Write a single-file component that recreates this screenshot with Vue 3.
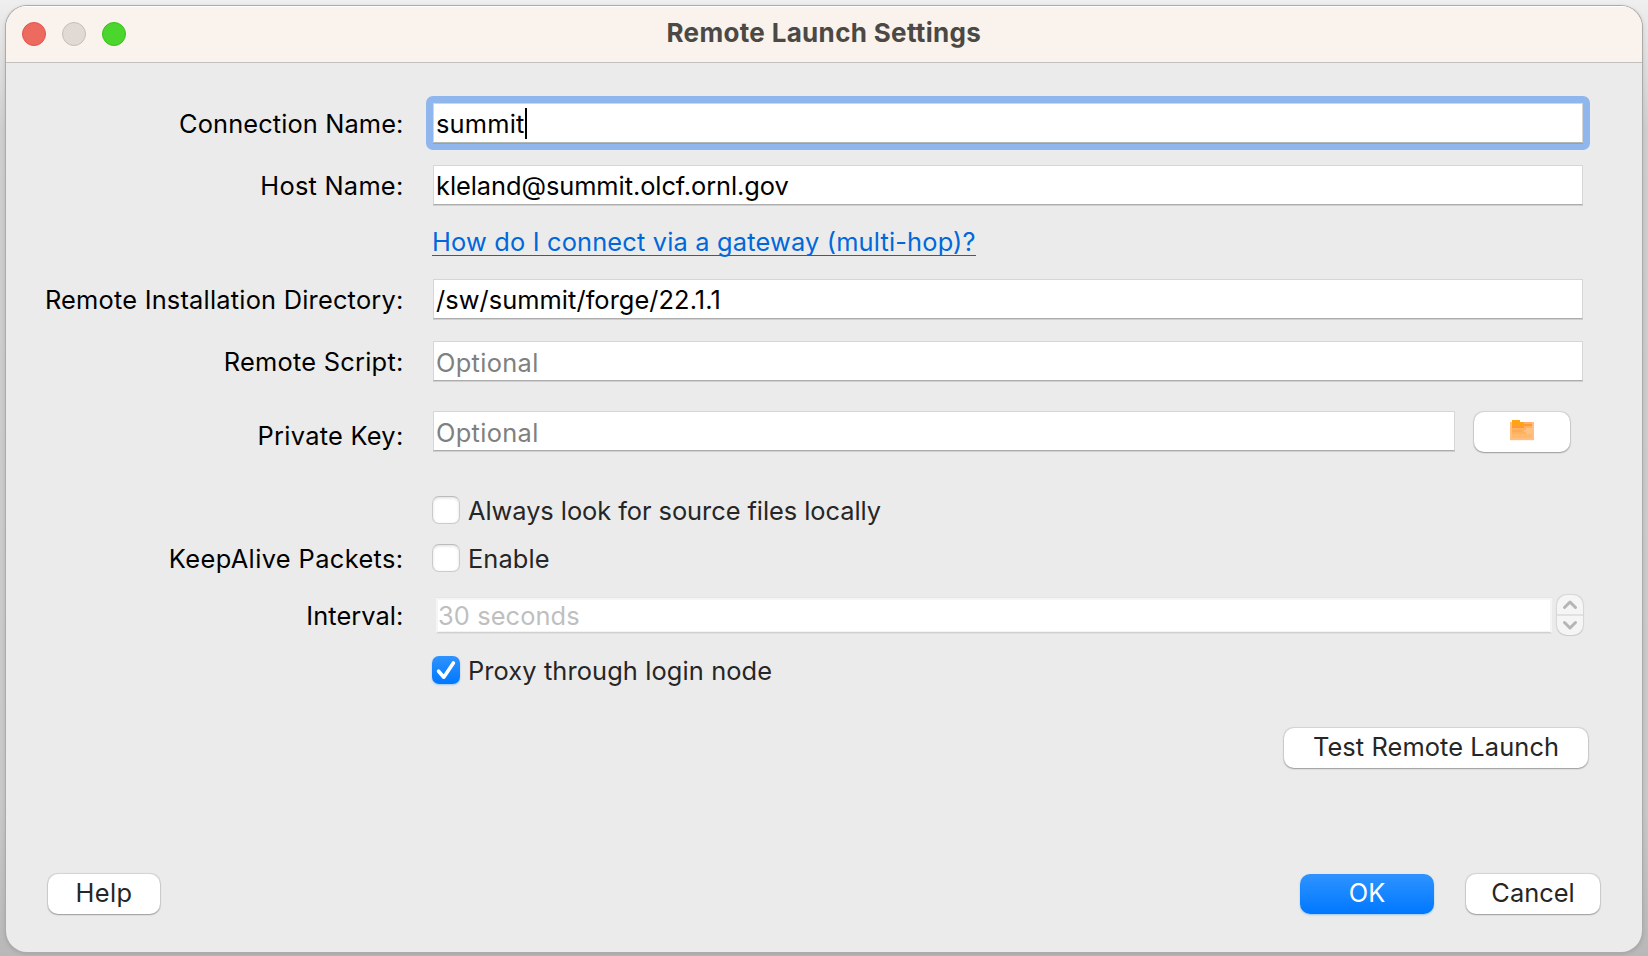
<script setup>
const ls = (v) => ({ letterSpacing: v + 'px' })

const fields = {
  name: { label: 'Connection Name:', ls: 0.11, value: 'summit', vs: 0.2 },
  host: { label: 'Host Name:', ls: 0.25, value: 'kleland@summit.olcf.ornl.gov', vs: -0.06 },
  dir: { label: 'Remote Installation Directory:', ls: 0.21, value: '/sw/summit/forge/22.1.1', vs: 0.06 },
  script: { label: 'Remote Script:', ls: 0.24, hint: 'Optional', vs: 0.33 },
  key: { label: 'Private Key:', ls: 0.27, hint: 'Optional', vs: 0.33 }
}
</script>

<template>
  <div class="desktop">
    <main class="window">
      <header class="titlebar">
        <div class="lights">
          <span class="light close"></span>
          <span class="light minimise"></span>
          <span class="light zoom"></span>
        </div>
        <h1 class="title">Remote Launch Settings</h1>
      </header>

      <form class="form" @submit.prevent>
        <div class="row row-name">
          <label class="label" :style="ls(fields.name.ls)">{{ fields.name.label }}</label>
          <div class="field focused"><span :style="ls(fields.name.vs)">{{ fields.name.value }}</span><i class="caret"></i></div>
        </div>

        <div class="row row-host">
          <label class="label" :style="ls(fields.host.ls)">{{ fields.host.label }}</label>
          <div class="field"><span :style="ls(fields.host.vs)">{{ fields.host.value }}</span></div>
        </div>

        <div class="row row-link">
          <span class="label"></span>
          <a class="link">How do I connect via a gateway (multi-hop)?</a>
        </div>

        <div class="row row-dir">
          <label class="label" :style="ls(fields.dir.ls)">{{ fields.dir.label }}</label>
          <div class="field"><span :style="ls(fields.dir.vs)">{{ fields.dir.value }}</span></div>
        </div>

        <div class="row row-script">
          <label class="label" :style="ls(fields.script.ls)">{{ fields.script.label }}</label>
          <div class="field hint low"><span :style="ls(fields.script.vs)">{{ fields.script.hint }}</span></div>
        </div>

        <div class="row row-key">
          <label class="label" :style="ls(fields.key.ls)">{{ fields.key.label }}</label>
          <div class="field hint low"><span :style="ls(fields.key.vs)">{{ fields.key.hint }}</span></div>
          <button class="btn browse" type="button" aria-label="Browse">
            <svg width="24" height="22" viewBox="0 0 24 22" shape-rendering="crispEdges">
              <path d="M0 2h24v18H0z" fill="#ffbf80" />
              <path d="M10 0h14v2H10zM0 0h2v2H0z" fill="#fff" />
              <path d="M2 0h8v2h4v4H2z" fill="#ffa414" />
              <path d="M10 0h4v2h-4z" fill="#fff" />
              <path d="M14 2h8v2h-8z" fill="#ffb06a" />
              <path d="M2 6h12v2H2zM14 4h8v2h-8z" fill="#ff9838" />
              <path d="M2 8h20v10H2zM14 6h8v2h-8z" fill="#ffb160" />
              <path d="M2 10h10v2H2z" fill="#ffa954" />
              <path d="M16 8h6v6h-6v-2h-2v-2h2z" fill="#ffc084" />
              <path d="M2 14h20v4H2z" fill="#ffb96c" />
              <path d="M0 20h24v1H0z" fill="#fff4e9" />
            </svg>
          </button>
        </div>

        <div class="row row-source">
          <span class="label"></span>
          <span class="box"></span>
          <span class="option" :style="ls(-0.05)">Always look for source files locally</span>
        </div>

        <div class="row row-keep">
          <label class="label" :style="ls(0.38)">KeepAlive Packets:</label>
          <span class="box"></span>
          <span class="option" :style="ls(0.1)">Enable</span>
        </div>

        <div class="row row-interval">
          <label class="label" :style="ls(0.08)">Interval:</label>
          <div class="spin"><span :style="ls(0.1)">30 seconds</span></div>
          <div class="stepper">
            <svg width="26" height="40" viewBox="0 0 26 40" fill="none" stroke="#b5b5b5" stroke-width="3" stroke-linecap="round" stroke-linejoin="round">
              <path d="M7.5 12.5l5.5-5.5 5.5 5.5" />
              <path d="M7.5 27.5l5.5 5.5 5.5-5.5" />
              <path d="M0 20h26" stroke="#e1e1e1" stroke-width="2" stroke-linecap="butt" />
            </svg>
          </div>
        </div>

        <div class="row row-proxy">
          <span class="label"></span>
          <span class="box checked">
            <svg width="28" height="28" viewBox="0 0 28 28" fill="none" stroke="#fff" stroke-width="3.6" stroke-linecap="round" stroke-linejoin="round">
              <path d="M6.6 15.2l5.2 6L21.4 7" />
            </svg>
          </span>
          <span class="option" :style="ls(0.11)">Proxy through login node</span>
        </div>

        <div class="test-bar">
          <button class="btn test" type="button">Test Remote Launch</button>
        </div>
      </form>

      <footer class="footer">
        <button class="btn help" type="button">Help</button>
        <button class="btn ok" type="button">OK</button>
        <button class="btn cancel" type="button">Cancel</button>
      </footer>
    </main>
  </div>
</template>

<style>
html,
body {
  overflow: hidden;
}
</style>

<style scoped>
* {
  box-sizing: border-box;
}

.desktop {
  width: 1648px;
  height: 956px;
  padding: 6px 6px 4px;
  background: linear-gradient(180deg, #efefef 0, #e6e6e6 30px, #cfcfcf 130px, #c9c9c9 800px, #b8b8b8 956px);
  font-family: Inter, "Liberation Sans", sans-serif;
  font-size: 25.4px;
  line-height: 40px;
  color: #000;
}

.window {
  display: flex;
  flex-direction: column;
  width: 1636px;
  height: 946px;
  border-radius: 21px;
  background: #ebebeb;
  box-shadow: 0 0 0 1px #ababab, 0 1px 4px 1px rgba(0, 0, 0, 0.12);
  overflow: hidden;
  white-space: nowrap;
}

.titlebar {
  display: flex;
  align-items: flex-start;
  flex: none;
  height: 57px;
  background: #faf2ec;
  border-bottom: 1px solid #c2c0be;
  box-shadow: inset 0 1px #fff;
}

.lights {
  display: flex;
  gap: 16px;
  width: 660.5px;
  padding: 16px 0 0 16px;
}

.light {
  width: 24px;
  height: 24px;
  border-radius: 50%;
}

.close {
  background: #ed6a5e;
  border: 1px solid #dd5549;
}

.minimise {
  background: #e1d9d4;
  border: 1px solid #c5beb9;
}

.zoom {
  background: #4bd62e;
  border: 1px solid #3bbe1d;
}

.title {
  margin: 7px 0 0;
  font-size: 26px;
  line-height: 40px;
  font-weight: 700;
  letter-spacing: 0.33px;
  color: #4b4946;
}

.form {
  display: flex;
  flex-direction: column;
  padding: 40px 60px 0 0;
}

.row {
  display: flex;
  align-items: flex-start;
  height: 40px;
}

.label {
  flex: none;
  width: 398px;
  padding: 1px 0.5px 0 0;
  text-align: right;
}

.field {
  position: relative;
  flex: none;
  display: flex;
  width: 1150px;
  height: 40px;
  margin-left: 29px;
  padding-left: 2px;
  background: #fff;
  border: 1px solid #d6d6d6;
  border-bottom-color: #adadad;
  box-shadow: 0 1px #cfcfcf;
  line-height: 40px;
}

.field.focused {
  border-bottom-color: #b3b9ae;
  box-shadow: 0 1px #84a3cf;
}

.field.focused::before {
  content: "";
  position: absolute;
  inset: -8px;
  border: 7px solid #90b6ee;
  border-bottom-width: 6px;
  border-radius: 7px;
}

.caret {
  width: 2px;
  height: 31px;
  margin-top: 4px;
  background: #000;
}

.hint {
  color: #808080;
}

.low {
  line-height: 42px;
}

.row-host {
  margin-top: 22px;
}

.row-link {
  margin-top: 16px;
}

.link {
  height: 35px;
  margin-left: 28px;
  padding-top: 1px;
  border-bottom: 1px solid #0068da;
  letter-spacing: 0.17px;
  color: #0068da;
}

.row-dir {
  margin-top: 18px;
}

.row-script {
  margin-top: 22px;
}

.row-key {
  margin-top: 30px;
}

.row-key .label {
  padding-top: 5px;
}

.row-key .field {
  width: 1022px;
}

.row-key .low {
  line-height: 41px;
}

.btn {
  display: flex;
  justify-content: center;
  flex: none;
  height: 40px;
  padding: 0;
  border: 0;
  border-radius: 10px;
  background: #fff;
  box-shadow: 0 0 1px 0.5px rgba(0, 0, 0, 0.1), 0 1px 1.5px rgba(0, 0, 0, 0.27);
  font: inherit;
  line-height: 37px;
  color: #262626;
}

.browse {
  align-items: flex-start;
  width: 96px;
  margin: 1px 0 0 19px;
  padding-top: 8px;
}

.box {
  flex: none;
  width: 28px;
  height: 28px;
  margin-left: 28px;
  border: 1px solid #cbcbcb;
  border-top-color: #bcbcbc;
  border-radius: 7px;
  background: #fff;
  box-shadow: inset 0 1px 3px rgba(0, 0, 0, 0.14);
}

.checked {
  border: 0;
  background: linear-gradient(#2e93ff, #0078ff);
  box-shadow: 0 1px 2px rgba(0, 122, 255, 0.35);
}

.checked svg {
  display: block;
}

.option {
  margin-left: 8px;
  margin-top: -5px;
  color: #262626;
}

.row-source {
  margin-top: 45px;
}

.row-keep {
  margin-top: 8px;
}

.row-keep .label {
  margin-top: -6px;
}

.row-interval {
  margin-top: 11px;
}

.spin {
  flex: none;
  width: 1116px;
  height: 35px;
  margin: 3px 0 0 32px;
  background: #fff;
  border: 2px solid #f5f5f5;
  border-bottom: 1px solid #d0d0d0;
  box-shadow: inset 0 -1px #f4f4f4, 0 -1px #e5e5e5, 0 1px #e0e0e0;
  line-height: 31px;
  color: #bfbfbf;
}

.stepper {
  flex: none;
  width: 26px;
  height: 40px;
  margin-left: 5px;
  border-radius: 10px;
  background: #f5f5f5;
  box-shadow: 0 0 1px 0.5px rgba(0, 0, 0, 0.09), 0 1px 1px rgba(0, 0, 0, 0.06);
}

.stepper svg {
  display: block;
}

.row-proxy {
  margin-top: 21px;
}

.test-bar {
  display: flex;
  justify-content: flex-end;
  margin-top: 32px;
}

.test {
  width: 304px;
  margin-right: -6px;
  letter-spacing: 0.1px;
}

.footer {
  display: flex;
  padding: 106px 42px 0;
}

.help {
  width: 112px;
  letter-spacing: 0.4px;
}

.ok {
  width: 134px;
  margin: 0 32px 0 auto;
  background: linear-gradient(#2e93ff, #0078ff);
  box-shadow: 0 1px 2px rgba(0, 122, 255, 0.35);
  color: #fff;
}

.cancel {
  width: 134px;
}
</style>
